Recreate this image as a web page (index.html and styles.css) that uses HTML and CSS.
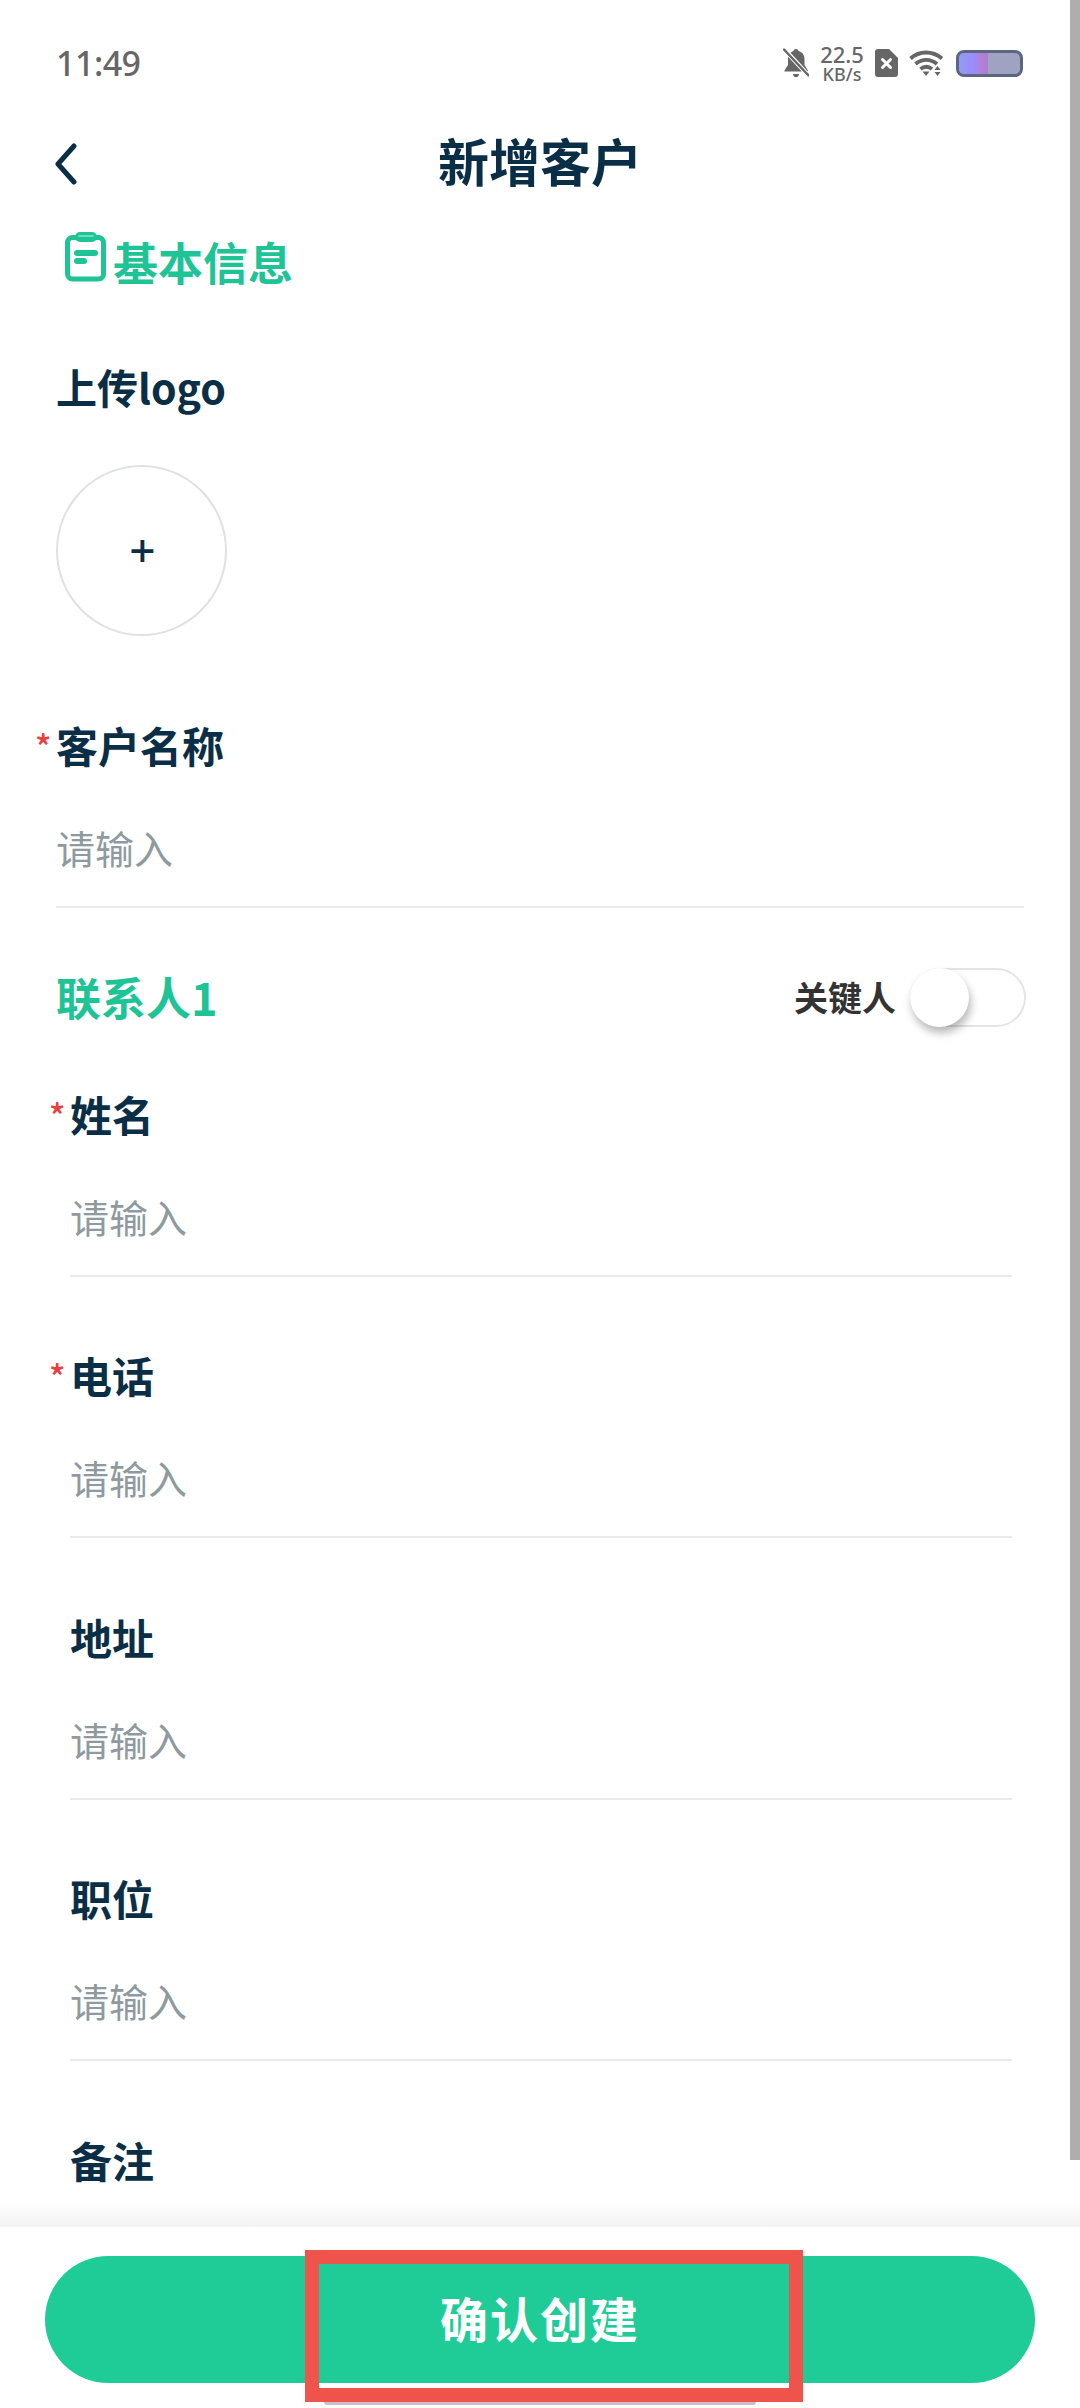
FILE: index.html
```html
<!DOCTYPE html>
<html lang="zh-CN">
<head>
<meta charset="utf-8">
<title>新增客户</title>
<link rel="stylesheet" href="styles.css">
</head>
<body>
<div class="screen">
  <div class="statusbar">
    <span class="time">11:49</span>
    <div class="status-icons">
      <svg class="ic-bell" viewBox="0 0 26 30" width="26" height="30"><path fill="#666" d="M13 1c1.400 0 2.300.9 2.500 2 4 1 6 4.300 6 8.500v5.500l3.500 5.500v1H1.500v-1L5 17v-5.500C5 7.300 7 4 10.500 3c.2-1.100 1.100-2 2.500-2zM10 26h6c0 2-1.300 3.200-3 3.200S10 28 10 26z"/><path stroke="#fff" stroke-width="4.500" d="M1 1l24 26"/><path stroke="#666" stroke-width="2.400" stroke-linecap="round" d="M1 1.500l24.500 26"/></svg>
      <div class="speed"><span class="speed-num">22.5</span><span class="speed-unit">KB/s</span></div>
      <svg class="ic-sim" viewBox="0 0 23 28" width="23" height="28"><path fill="#666" d="M3 0h11l9 9v16a3 3 0 0 1-3 3H3a3 3 0 0 1-3-3V3a3 3 0 0 1 3-3z"/><path stroke="#fff" stroke-width="3" stroke-linecap="round" d="M7.500 10.500l8 8M15.500 10.500l-8 8"/></svg>
      <svg class="ic-wifi" viewBox="0 0 36 28" width="36" height="28"><g fill="none" stroke="#666" stroke-width="3.800"><path d="M1.500 9.500C10.500 1.500 23.500 1.500 33 9.500"/><path d="M6.500 15c6.500-5.500 15-5.500 21.500 0"/><path d="M11.500 20c3.500-2.700 8-2.700 11.500 0"/></g><path fill="#666" d="M13.500 22.500h7l-3.500 4.500zM28.500 17l3 4h-6zM25.500 23h6l-3 4z"/></svg>
      <div class="battery"><span class="battery-fill"></span></div>
    </div>
  </div>

  <header class="navbar">
    <svg class="back" viewBox="0 0 22 42" width="22" height="42"><path fill="none" stroke="#0b2e47" stroke-width="5" stroke-linecap="round" stroke-linejoin="round" d="M19 3L3 21l16 18"/></svg>
    <h1 class="title">新增客户</h1>
  </header>

  <main class="form">
    <div class="section-head">
      <svg class="ic-clip" viewBox="0 0 41 50" width="41" height="50"><rect x="2.500" y="5.500" width="36" height="41.500" rx="5" fill="none" stroke="#1fc496" stroke-width="5"/><rect x="10" y="0" width="22" height="10" rx="5" fill="#1fc496"/><rect x="13" y="3" width="16" height="2" rx="1" fill="#6fdcbc"/><rect x="9" y="18" width="24" height="6" rx="3" fill="#1fc496"/><rect x="9" y="26" width="13" height="6" rx="3" fill="#1fc496"/></svg>
      <span class="section-title">基本信息</span>
    </div>

    <div class="label upload-label">上传logo</div>
    <div class="upload"><span class="plus">+</span></div>

    <div class="field field-name">
      <div class="label req">客户名称</div>
      <div class="placeholder">请输入</div>
    </div>

    <div class="contact-head">
      <span class="contact-title">联系人1</span>
      <div class="key-person">
        <span class="key-label">关键人</span>
        <span class="switch"><span class="knob"></span></span>
      </div>
    </div>

    <div class="contact">
      <div class="field"><div class="label req">姓名</div><div class="placeholder">请输入</div></div>
      <div class="field"><div class="label req">电话</div><div class="placeholder">请输入</div></div>
      <div class="field"><div class="label">地址</div><div class="placeholder">请输入</div></div>
      <div class="field"><div class="label">职位</div><div class="placeholder">请输入</div></div>
      <div class="field"><div class="label">备注</div></div>
    </div>
  </main>

  <div class="scrollbar"></div>

  <footer class="footer">
    <button class="confirm">确认创建</button>
  </footer>
  <div class="highlight"></div>
  <div class="home-bar"></div>
</div>
</body>
</html>
```

FILE: styles.css
```css
* { box-sizing: border-box; }
html, body { margin: 0; padding: 0; background: #fff; }
body { font-family: "Noto Sans CJK SC", "Noto Sans", sans-serif; }
.screen { position: relative; width: 1080px; height: 2408px; overflow: hidden; background: #fff; }

.statusbar { height: 121px; padding: 38px 57px 0 56px; display: flex; align-items: flex-start; justify-content: space-between; }
.time { font-family: "Noto Sans", sans-serif; font-size: 34px; line-height: 50px; font-weight: 500; color: #666; letter-spacing: -0.5px; }
.status-icons { display: flex; align-items: center; gap: 11px; height: 50px; }
.speed { display: flex; flex-direction: column; align-items: center; width: 44px; color: #666; font-family: "Noto Sans", sans-serif; font-weight: 500; line-height: 1; }
.speed-num { font-size: 22px; line-height: 21px; }
.speed-unit { font-size: 18px; line-height: 18px; }
.battery { width: 67px; height: 27px; border: 3px solid #5d6680; border-radius: 8px; background: #a0a2c2; overflow: hidden; }
.battery-fill { display: block; width: 29px; height: 100%; background: linear-gradient(90deg, #8f9cf0 0%, #9b8cf8 55%, #b47fd8 75%, #a77fd0 100%); }

.navbar { position: relative; height: 76px; padding-top: 2px; display: flex; align-items: center; justify-content: center; }
.back { position: absolute; left: 55px; top: 22px; }
.title { margin: 0; font-size: 51px; line-height: 74px; font-weight: 700; color: #0b2e47; }

.form { padding: 0 56px; }
.section-head { display: flex; align-items: center; height: 60px; margin-top: 35px; padding-left: 9px; }
.ic-clip { margin-right: 7px; margin-bottom: 10px; flex: none; }
.section-title { font-size: 45px; line-height: 60px; font-weight: 700; color: #1fc496; }

.label { position: relative; font-size: 42px; line-height: 60px; font-weight: 700; color: #0b2e47; }
.upload-label { margin-top: 64px; font-size: 41px; }
.req::before { content: "*"; position: absolute; left: -21px; top: 6px; font-size: 34px; line-height: 50px; font-weight: 500; color: #e8403f; }
.upload { width: 171px; height: 171px; margin-top: 49px; border: 2px solid #dfe1e3; border-radius: 50%; display: flex; align-items: center; justify-content: center; padding: 0 0 3px 2px; }
.plus { font-family: "Noto Sans", sans-serif; font-size: 46px; line-height: 46px; font-weight: 500; color: #0b2e47; }

.field { height: 261.500px; }
.field-name { height: auto; margin-top: 79px; width: 968px; }
.placeholder { margin-top: 44px; height: 89px; border-bottom: 2px solid #e8eaeb; font-size: 39px; line-height: 56px; color: #8e9a9f; }

.contact-head { display: flex; align-items: center; justify-content: space-between; height: 60px; margin-top: 59px; width: 970px; }
.contact-title { font-size: 45px; line-height: 60px; font-weight: 700; color: #1fc496; }
.key-person { display: flex; align-items: center; gap: 14px; }
.key-label { font-size: 34px; line-height: 50px; font-weight: 700; color: #333; }
.switch { position: relative; display: block; width: 116px; height: 59px; border: 2px solid #e4e4e4; border-radius: 30px; background: #fff; }
.knob { position: absolute; left: -2px; top: -2px; width: 59px; height: 59px; border-radius: 50%; background: #fff; box-shadow: 2px 6px 8px rgba(0, 0, 0, 0.28); }

.contact { margin-top: 56.500px; padding: 0 12px 0 14px; }

.scrollbar { position: absolute; top: 0; right: 0; width: 10px; height: 2160px; background: #aeaeae; }

.footer { position: absolute; left: 0; right: 0; bottom: 0; height: 181px; padding: 29px 45px 0; background: #fff; }
.footer::before { content: ""; position: absolute; left: 0; right: 0; top: -26px; height: 26px; background: linear-gradient(180deg, rgba(240, 240, 240, 0), #f3f3f3); }
.confirm { display: block; width: 990px; height: 127px; border: 0; border-radius: 64px; background: #1fcc98; color: #fff; font-family: inherit; font-size: 48px; font-weight: 700; letter-spacing: 2px; padding: 0 0 6px; }

.highlight { position: absolute; left: 305px; top: 2250px; width: 498px; height: 152px; border: 14px solid #ef544c; }
.home-bar { position: absolute; left: 324px; top: 2402px; width: 432px; height: 3px; background: #cdbfc6; border-radius: 0 0 3px 3px; }
```
